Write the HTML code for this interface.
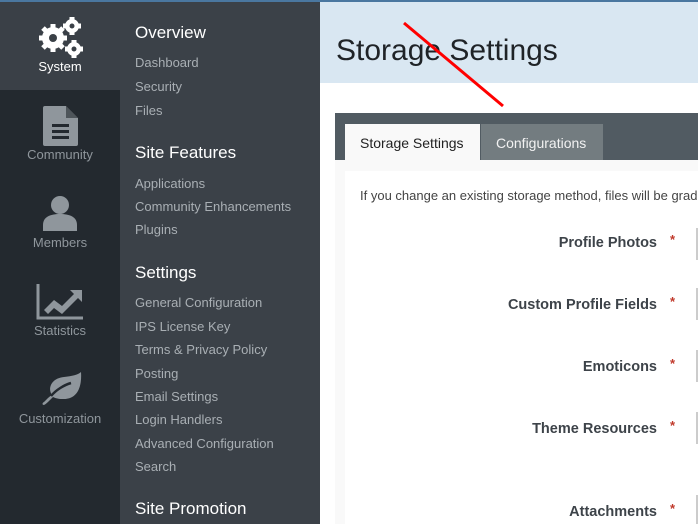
<!DOCTYPE html>
<html><head><meta charset="utf-8"><style>
*{margin:0;padding:0;box-sizing:border-box}
html,body{width:698px;height:524px;overflow:hidden}
body{background:#fff;font-family:"Liberation Sans",Arial,sans-serif;position:relative}
.top{position:absolute;left:0;top:0;width:698px;height:2px;background:#4a77a0}
.icons{position:absolute;left:0;top:2px;width:120px;height:522px;background:#23292f}
.sys{position:absolute;left:0;top:2px;width:120px;height:88px;background:#3a4047}
.ic{position:absolute;left:0;width:120px;text-align:center;font-size:13px;color:#8f969c}
.menu{position:absolute;left:120px;top:2px;width:200px;height:522px;background:#3b4148}
.menu h3{position:absolute;left:15px;font-size:17px;font-weight:normal;color:#fff}
.menu a{position:absolute;left:15px;font-size:13px;color:#a9afb4}
.hdr{position:absolute;left:320px;top:2px;width:378px;height:81px;background:#d9e7f2}
.hdr h1{position:absolute;left:16px;top:32px;font-size:30px;font-weight:normal;color:#1f2327;white-space:nowrap}
.band{position:absolute;left:335px;top:113px;width:363px;height:47px;background:#515b62}
.t1{position:absolute;left:345px;top:124px;width:135px;height:36px;background:#f9f9f9;font-size:14px;color:#222;padding:11px 0 0 15px}
.t2{position:absolute;left:481px;top:124px;width:122px;height:36px;background:#737c80;font-size:14px;color:#f2f2f2;padding:11px 0 0 15px}
.cont{position:absolute;left:335px;top:160px;width:363px;height:364px;background:#f9f9f9}
.inner{position:absolute;left:345px;top:171px;width:353px;height:353px;background:#fff}
.info{position:absolute;left:360px;top:188px;width:338px;overflow:hidden;font-size:13px;color:#444;white-space:nowrap}
.lbl{position:absolute;right:41px;font-size:14.5px;font-weight:bold;color:#3d4349;white-space:nowrap}
.st{position:absolute;left:670px;font-size:13px;color:#c0392b;font-weight:bold}
.inp{position:absolute;left:696px;width:2px;height:32px;background:#ccc}
</style></head><body>
<div class="top"></div>
<div class="icons"></div>
<div class="sys"></div>
<svg style="position:absolute;left:38px;top:16px" width="46" height="42" viewBox="0 0 46 42">
<g fill="#fff"><circle cx="15" cy="22" r="11"/><circle cx="34" cy="10" r="7"/><circle cx="36" cy="33" r="7"/>
<g stroke="#fff" stroke-width="5"><line x1="15" y1="8" x2="15" y2="36"/><line x1="1" y1="22" x2="29" y2="22"/><line x1="5" y1="12" x2="25" y2="32"/><line x1="5" y1="32" x2="25" y2="12"/>
<line x1="34" y1="1" x2="34" y2="19"/><line x1="25" y1="10" x2="43" y2="10"/><line x1="36" y1="24" x2="36" y2="42"/><line x1="27" y1="33" x2="45" y2="33"/></g></g>
<g fill="#3a4047"><circle cx="15" cy="22" r="4"/><circle cx="34" cy="10" r="2.5"/><circle cx="36" cy="33" r="2.5"/></g></svg>
<div class="ic" style="top:59px;color:#fff">System</div>
<svg style="position:absolute;left:43px;top:106px" width="35" height="40" viewBox="0 0 35 40"><path d="M2 0H23L35 12V38a2 2 0 0 1-2 2H2a2 2 0 0 1-2-2V2a2 2 0 0 1 2-2z" fill="#8f969c"/><path d="M23 0V12H35" fill="#23292f" opacity=".6"/><rect x="9" y="18" width="17" height="3" fill="#23292f"/><rect x="9" y="24" width="17" height="3" fill="#23292f"/><rect x="9" y="30" width="17" height="3" fill="#23292f"/></svg>
<div class="ic" style="top:147px">Community</div>
<svg style="position:absolute;left:43px;top:195px" width="34" height="36" viewBox="0 0 34 36"><circle cx="17" cy="10" r="9" fill="#8f969c"/><path d="M0 36V30C0 22 7 19 17 19S34 22 34 30V36Z" fill="#8f969c"/></svg>
<div class="ic" style="top:235px">Members</div>
<svg style="position:absolute;left:36px;top:284px" width="48" height="36" viewBox="0 0 48 36"><path d="M2 0V34H47" stroke="#8f969c" stroke-width="3" fill="none"/><path d="M8 26L18 16L26 22L38 10L34 6H46V18L42 14L26 30L18 24L12 30Z" fill="#8f969c"/></svg>
<div class="ic" style="top:323px">Statistics</div>
<svg style="position:absolute;left:40px;top:372px" width="42" height="34" viewBox="0 0 42 34"><path d="M4 30C8 26 10 24 12 23C7 16 12 6 24 5C32 4 38 3 41 0C42 14 38 28 22 27C18 27 15 26 13 25L10 28C8 30 6 32 4 33C2 33 2 31 4 30Z" fill="#8f969c"/><path d="M11 24C16 18 24 13 31 11" stroke="#23292f" stroke-width="2.5" fill="none"/></svg>
<div class="ic" style="top:411px">Customization</div>
<div class="menu">
<h3 style="top:21px">Overview</h3>
<a style="top:53px">Dashboard</a><a style="top:77px">Security</a><a style="top:101px">Files</a>
<h3 style="top:141px">Site Features</h3>
<a style="top:174px">Applications</a><a style="top:197px">Community Enhancements</a><a style="top:220px">Plugins</a>
<h3 style="top:261px">Settings</h3>
<a style="top:293px">General Configuration</a><a style="top:317px">IPS License Key</a><a style="top:340px">Terms &amp; Privacy Policy</a><a style="top:364px">Posting</a><a style="top:387px">Email Settings</a><a style="top:410px">Login Handlers</a><a style="top:434px">Advanced Configuration</a><a style="top:457px">Search</a>
<h3 style="top:497px">Site Promotion</h3>
</div>
<div class="hdr"><h1>Storage Settings</h1></div>
<div class="band"></div>
<div class="t1">Storage Settings</div>
<div class="t2">Configurations</div>
<div class="cont"></div>
<div class="inner"></div>
<div class="info">If you change an existing storage method, files will be gradually moved</div>
<div class="lbl" style="top:235px">Profile Photos</div><div class="st" style="top:232px">*</div><div class="inp" style="top:228px"></div>
<div class="lbl" style="top:297px">Custom Profile Fields</div><div class="st" style="top:294px">*</div><div class="inp" style="top:288px"></div>
<div class="lbl" style="top:359px">Emoticons</div><div class="st" style="top:356px">*</div><div class="inp" style="top:350px"></div>
<div class="lbl" style="top:421px">Theme Resources</div><div class="st" style="top:418px">*</div><div class="inp" style="top:412px"></div>
<div class="lbl" style="top:504px">Attachments</div><div class="st" style="top:501px">*</div><div class="inp" style="top:495px"></div>
<svg style="position:absolute;left:0;top:0" width="698" height="524"><line x1="404" y1="23" x2="503" y2="106" stroke="#f00" stroke-width="3"/></svg>
</body></html>
